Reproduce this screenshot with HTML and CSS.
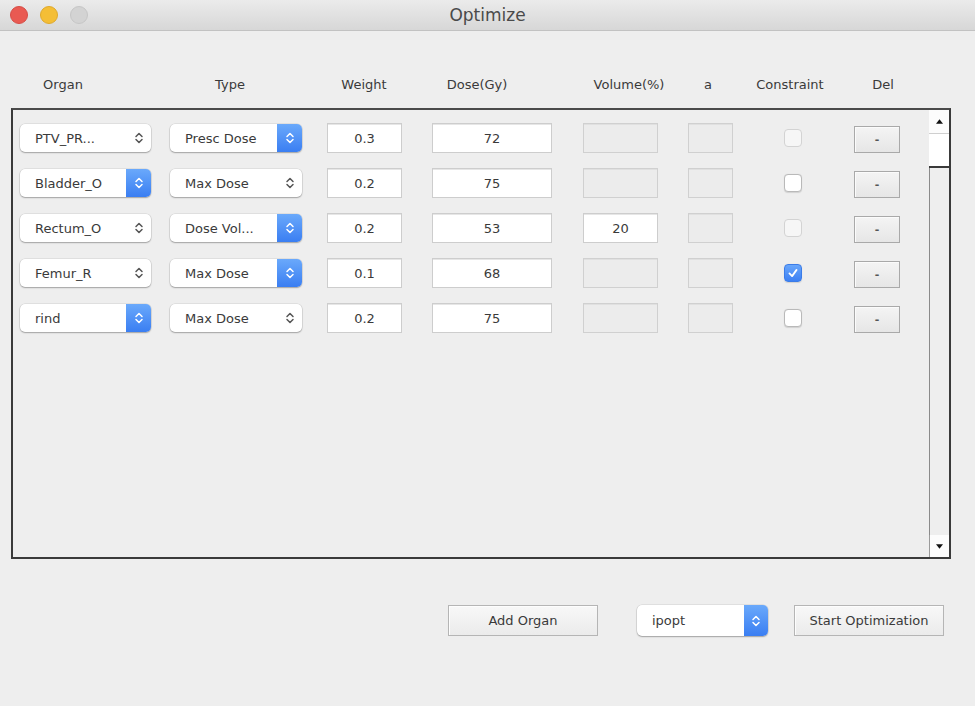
FILE: index.html
```html
<!DOCTYPE html>
<html>
<head>
<meta charset="utf-8">
<title>Optimize</title>
<link rel="stylesheet" href="styles.css">
</head>
<body>
<div class="window">
  <header class="titlebar">
    <div class="lights">
      <span class="light red"></span>
      <span class="light yellow"></span>
      <span class="light gray"></span>
    </div>
    <div class="title">Optimize</div>
  </header>

  <main class="content">
    <div class="headers">
      <span>Organ</span>
      <span>Type</span>
      <span>Weight</span>
      <span>Dose(Gy)</span>
      <span>Volume(%)</span>
      <span>a</span>
      <span>Constraint</span>
      <span>Del</span>
    </div>

    <div class="panel">
      <div class="rows">
        <div class="row">
          <div class="popup organ"><span class="label">PTV_PR...</span><span class="stepper"><svg viewBox="0 0 10 14"><path d="M2 5.5 5 2.5 8 5.5M2 8.5 5 11.5 8 8.5"/></svg></span></div>
          <div class="popup type"><span class="label">Presc Dose</span><span class="stepper blue"><svg viewBox="0 0 10 14"><path d="M2 5.5 5 2.5 8 5.5M2 8.5 5 11.5 8 8.5"/></svg></span></div>
          <div class="field weight">0.3</div>
          <div class="field dose">72</div>
          <div class="field volume disabled"></div>
          <div class="field alpha disabled"></div>
          <div class="check-cell"><span class="check disabled"></span></div>
          <div class="del-cell"><button class="del">-</button></div>
        </div>
        <div class="row">
          <div class="popup organ"><span class="label">Bladder_O</span><span class="stepper blue"><svg viewBox="0 0 10 14"><path d="M2 5.5 5 2.5 8 5.5M2 8.5 5 11.5 8 8.5"/></svg></span></div>
          <div class="popup type"><span class="label">Max Dose</span><span class="stepper"><svg viewBox="0 0 10 14"><path d="M2 5.5 5 2.5 8 5.5M2 8.5 5 11.5 8 8.5"/></svg></span></div>
          <div class="field weight">0.2</div>
          <div class="field dose">75</div>
          <div class="field volume disabled"></div>
          <div class="field alpha disabled"></div>
          <div class="check-cell"><span class="check"></span></div>
          <div class="del-cell"><button class="del">-</button></div>
        </div>
        <div class="row">
          <div class="popup organ"><span class="label">Rectum_O</span><span class="stepper"><svg viewBox="0 0 10 14"><path d="M2 5.5 5 2.5 8 5.5M2 8.5 5 11.5 8 8.5"/></svg></span></div>
          <div class="popup type"><span class="label">Dose Vol...</span><span class="stepper blue"><svg viewBox="0 0 10 14"><path d="M2 5.5 5 2.5 8 5.5M2 8.5 5 11.5 8 8.5"/></svg></span></div>
          <div class="field weight">0.2</div>
          <div class="field dose">53</div>
          <div class="field volume">20</div>
          <div class="field alpha disabled"></div>
          <div class="check-cell"><span class="check disabled"></span></div>
          <div class="del-cell"><button class="del">-</button></div>
        </div>
        <div class="row">
          <div class="popup organ"><span class="label">Femur_R</span><span class="stepper"><svg viewBox="0 0 10 14"><path d="M2 5.5 5 2.5 8 5.5M2 8.5 5 11.5 8 8.5"/></svg></span></div>
          <div class="popup type"><span class="label">Max Dose</span><span class="stepper blue"><svg viewBox="0 0 10 14"><path d="M2 5.5 5 2.5 8 5.5M2 8.5 5 11.5 8 8.5"/></svg></span></div>
          <div class="field weight">0.1</div>
          <div class="field dose">68</div>
          <div class="field volume disabled"></div>
          <div class="field alpha disabled"></div>
          <div class="check-cell"><span class="check checked"><svg viewBox="0 0 18 18"><path d="M5 9.5 8 12.5 13 5.5"/></svg></span></div>
          <div class="del-cell"><button class="del">-</button></div>
        </div>
        <div class="row">
          <div class="popup organ"><span class="label">rind</span><span class="stepper blue"><svg viewBox="0 0 10 14"><path d="M2 5.5 5 2.5 8 5.5M2 8.5 5 11.5 8 8.5"/></svg></span></div>
          <div class="popup type"><span class="label">Max Dose</span><span class="stepper"><svg viewBox="0 0 10 14"><path d="M2 5.5 5 2.5 8 5.5M2 8.5 5 11.5 8 8.5"/></svg></span></div>
          <div class="field weight">0.2</div>
          <div class="field dose">75</div>
          <div class="field volume disabled"></div>
          <div class="field alpha disabled"></div>
          <div class="check-cell"><span class="check"></span></div>
          <div class="del-cell"><button class="del">-</button></div>
        </div>
      </div>

      <div class="scrollbar">
        <div class="sb-btn"><svg viewBox="0 0 8 5"><path d="M0 5 4 0 8 5Z"/></svg></div>
        <div class="sb-thumb"></div>
        <div class="sb-track"></div>
        <div class="sb-btn bottom"><svg viewBox="0 0 8 5"><path d="M0 0 8 0 4 5Z"/></svg></div>
      </div>
    </div>

    <div class="actions">
      <button class="btn add">Add Organ</button>
      <div class="popup solver"><span class="label">ipopt</span><span class="stepper blue"><svg viewBox="0 0 10 14"><path d="M2 5.5 5 2.5 8 5.5M2 8.5 5 11.5 8 8.5"/></svg></span></div>
      <button class="btn start">Start Optimization</button>
    </div>
  </main>
</div>
</body>
</html>
```

FILE: styles.css
```css
* { box-sizing: border-box; }

html, body {
  margin: 0;
  padding: 0;
  background: #eeeeee;
}

body {
  font-family: "DejaVu Sans", "Liberation Sans", sans-serif;
  font-size: 13px;
  color: #3a3a3a;
}

.window {
  width: 975px;
  height: 706px;
  background: #eeeeee;
  display: flex;
  flex-direction: column;
}

/* ---------- title bar ---------- */
.titlebar {
  height: 31px;
  flex: none;
  display: flex;
  align-items: center;
  position: relative;
  background: linear-gradient(#ebebeb, #d7d7d7);
  border-bottom: 1px solid #c2c2c2;
}

.lights {
  display: flex;
  gap: 12px;
  padding-left: 10px;
}

.light {
  width: 18px;
  height: 18px;
  border-radius: 50%;
}
.light.red { background: #e95a52; border: 1px solid #d64c45; }
.light.yellow { background: #f4be36; border: 1px solid #dfa92b; }
.light.gray { background: #d3d3d3; border: 1px solid #c6c6c6; }

.title {
  position: absolute;
  left: 0;
  right: 0;
  text-align: center;
  font-size: 17px;
  color: #4a4a4a;
}

/* ---------- content ---------- */
.content {
  flex: 1;
  display: flex;
  flex-direction: column;
}

.headers {
  margin-top: 44px;
  height: 18px;
  display: grid;
  grid-template-columns: 126px 208px 60px 166px 138px 20px 144px 42px;
  align-items: center;
  font-size: 13px;
  color: #3a3a3a;
}
.headers span { text-align: center; white-space: nowrap; }

.panel {
  margin-top: 15px;
  margin-left: 11px;
  width: 940px;
  height: 451px;
  border: 2px solid #3a3a3a;
  border-top-color: #4a4a4a;
  display: flex;
  background: #eeeeee;
}

.rows {
  flex: 1;
  padding: 13px 0 0 7px;
  display: flex;
  flex-direction: column;
  gap: 15px;
}

.row {
  height: 30px;
  display: flex;
  align-items: center;
}

/* popup buttons */
.popup {
  height: 28px;
  display: flex;
  align-items: center;
  background: #fff;
  border-radius: 5px;
  box-shadow: 0 0 0 0.5px rgba(0,0,0,0.12), 0 1px 1.5px rgba(0,0,0,0.28);
  overflow: hidden;
}
.popup .label {
  flex: 1;
  padding-left: 15px;
  white-space: nowrap;
  color: #3a3a3a;
}
.popup .stepper {
  width: 25px;
  align-self: stretch;
  display: flex;
  align-items: center;
  justify-content: center;
}
.popup .stepper svg {
  width: 10px;
  height: 14px;
  fill: none;
  stroke: #555;
  stroke-width: 1.5;
  stroke-linecap: round;
  stroke-linejoin: round;
}
.popup .stepper.blue {
  background: linear-gradient(#6aa9fb, #3a7ef2);
}
.popup .stepper.blue svg { stroke: #fff; }

.popup.organ { width: 131px; }
.popup.type { width: 132px; margin-left: 19px; }

/* text fields */
.field {
  height: 30px;
  display: flex;
  align-items: center;
  justify-content: center;
  background: #fff;
  border: 1px solid #cdcdcd;
  box-shadow: inset 0 1px 0 #e6e6e6;
  color: #3a3a3a;
}
.field.disabled {
  background: #ececec;
  border-color: #d0d0d0;
  box-shadow: inset 0 1px 0 #e0e0e0;
}
.field.weight { width: 75px; margin-left: 25px; }
.field.dose { width: 120px; margin-left: 30px; }
.field.volume { width: 75px; margin-left: 31px; }
.field.alpha { width: 45px; margin-left: 30px; }

/* checkbox */
.check-cell {
  margin-left: 51px;
  width: 18px;
  height: 18px;
}
.check {
  display: block;
  width: 18px;
  height: 18px;
  border-radius: 4px;
  background: #fff;
  border: 1px solid #b9b9b9;
  box-shadow: 0 0.5px 1px rgba(0,0,0,0.12);
}
.check.disabled {
  background: #f6f6f6;
  border-color: #d3d3d3;
  box-shadow: none;
}
.check.checked {
  background: linear-gradient(#68a6fb, #3c80f3);
  border-color: #3b7ce8;
}
.check.checked svg {
  width: 16px;
  height: 16px;
  fill: none;
  stroke: #fff;
  stroke-width: 2;
  stroke-linecap: round;
  stroke-linejoin: round;
}

/* delete buttons */
.del-cell {
  margin-left: 52px;
  display: flex;
  align-items: center;
  padding-top: 3px;
}
.del {
  width: 46px;
  height: 27px;
  padding: 0;
  font-family: inherit;
  font-size: 11px;
  font-weight: bold;
  color: #555;
  background: linear-gradient(#f4f4f4, #e6e6e6);
  border: 1px solid #a9a9a9;
  border-radius: 0;
  box-shadow: inset 1px 1px 0 #fbfbfb;
}

/* scrollbar */
.scrollbar {
  width: 20px;
  flex: none;
  display: flex;
  flex-direction: column;
}
.sb-btn {
  height: 23px;
  background: #fcfcfc;
  display: flex;
  align-items: center;
  justify-content: center;
}
.sb-btn.bottom {
  border-left: 1px solid #9a9a9a;
  height: 22px;
}
.sb-btn svg { width: 7px; height: 5px; fill: #111; }
.sb-thumb {
  height: 35px;
  background: #fff;
  border-top: 1px solid #cfcfcf;
  border-bottom: 2px solid #3a3a3a;
}
.sb-track {
  flex: 1;
  background: #eeeeee;
  border-left: 1px solid #8a8a8a;
}

/* bottom actions */
.actions {
  margin-top: 46px;
  padding-left: 448px;
  display: flex;
  align-items: center;
}
.btn {
  width: 150px;
  height: 31px;
  padding: 0;
  font-family: inherit;
  font-size: 13px;
  color: #3a3a3a;
  background: linear-gradient(#f8f8f8, #ebebeb);
  border: 1px solid #b5b5b5;
  border-radius: 0;
  box-shadow: inset 1px 1px 0 #fdfdfd;
}
.popup.solver {
  width: 131px;
  height: 31px;
  margin-left: 39px;
}
.popup.solver .stepper { width: 24px; }
.btn.start { margin-left: 26px; }
```
